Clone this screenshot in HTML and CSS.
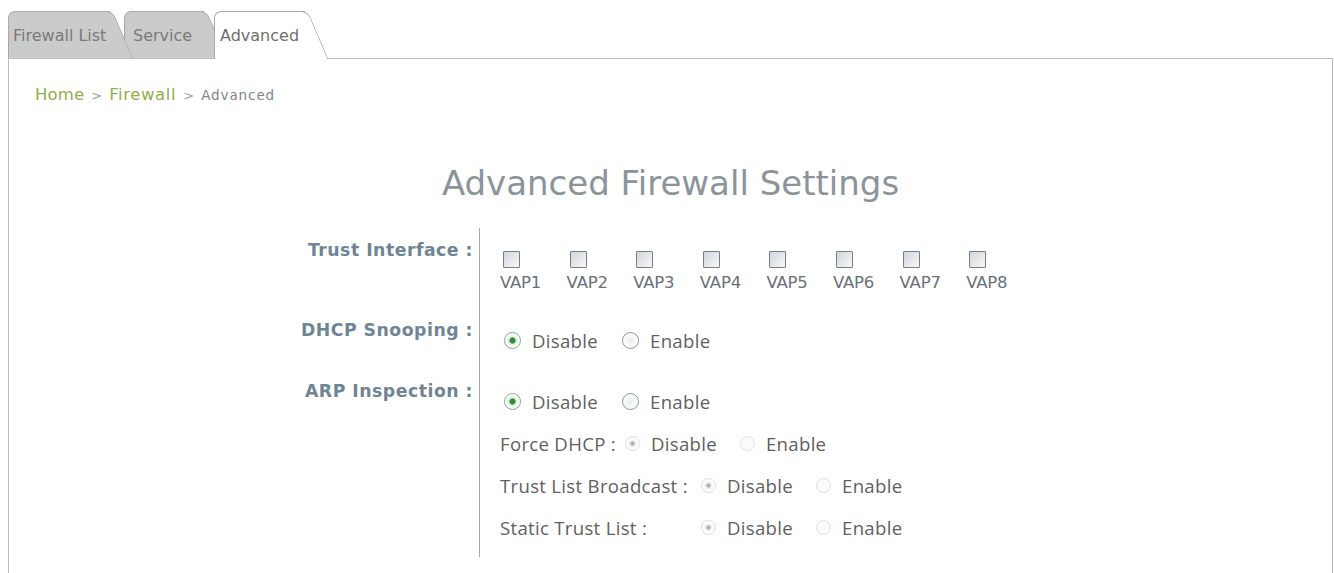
FILE: index.html
```html
<!DOCTYPE html>
<html>
<head>
<meta charset="utf-8">
<link rel="stylesheet" href="styles.css">
</head>
<body>
<div class="tabs">
  <div class="tab tab-first">Firewall List</div>
  <div class="tab tab-second">Service</div>
  <div class="tab tab-active">Advanced</div>
</div>
<div class="frame">
  <div class="crumbs"><span class="crumb-link">Home</span><span class="crumb-sep">&gt;</span><span class="crumb-link">Firewall</span><span class="crumb-sep">&gt;</span><span class="crumb-current">Advanced</span></div>
  <h1 class="title">Advanced Firewall Settings</h1>
  <div class="form">
    <div class="label label-trust">Trust Interface :</div>
    <div class="field field-trust">
      <div class="vaps">
        <label class="vap"><input type="checkbox" class="cb"><span class="vap-name">VAP1</span></label>
        <label class="vap"><input type="checkbox" class="cb"><span class="vap-name">VAP2</span></label>
        <label class="vap"><input type="checkbox" class="cb"><span class="vap-name">VAP3</span></label>
        <label class="vap"><input type="checkbox" class="cb"><span class="vap-name">VAP4</span></label>
        <label class="vap"><input type="checkbox" class="cb"><span class="vap-name">VAP5</span></label>
        <label class="vap"><input type="checkbox" class="cb"><span class="vap-name">VAP6</span></label>
        <label class="vap"><input type="checkbox" class="cb"><span class="vap-name">VAP7</span></label>
        <label class="vap"><input type="checkbox" class="cb"><span class="vap-name">VAP8</span></label>
      </div>
    </div>

    <div class="label label-dhcp">DHCP Snooping :</div>
    <div class="field field-dhcp">
      <div class="line">
        <input type="radio" name="dhcp" class="rd" checked><span class="opt opt-dis">Disable</span>
        <input type="radio" name="dhcp" class="rd"><span class="opt">Enable</span>
      </div>
    </div>

    <div class="label label-arp">ARP Inspection :</div>
    <div class="field field-arp">
      <div class="line">
        <input type="radio" name="arp" class="rd" checked><span class="opt opt-dis">Disable</span>
        <input type="radio" name="arp" class="rd"><span class="opt">Enable</span>
      </div>
      <div class="line sub">
        <span class="sub-label sub-force">Force DHCP :</span>
        <input type="radio" name="force" class="rd rd-off" checked disabled><span class="opt opt-dis2">Disable</span>
        <input type="radio" name="force" class="rd rd-off" disabled><span class="opt">Enable</span>
      </div>
      <div class="line sub">
        <span class="sub-label sub-wide">Trust List Broadcast :</span>
        <input type="radio" name="bcast" class="rd rd-off" checked disabled><span class="opt opt-dis2">Disable</span>
        <input type="radio" name="bcast" class="rd rd-off" disabled><span class="opt">Enable</span>
      </div>
      <div class="line sub">
        <span class="sub-label sub-wide">Static Trust List :</span>
        <input type="radio" name="static" class="rd rd-off" checked disabled><span class="opt opt-dis2">Disable</span>
        <input type="radio" name="static" class="rd rd-off" disabled><span class="opt">Enable</span>
      </div>
    </div>
  </div>
</div>
</body>
</html>
```

FILE: styles.css
```css
html, body {
  background: #ffffff;
}
body {
  margin: 10px 1px 0 8px;
  font-family: "DejaVu Sans", Verdana, sans-serif;
  overflow: hidden;
  height: 563px;
}

/* ---------- tabs ---------- */
.tabs {
  display: flex;
  align-items: flex-end;
  height: 48px;
  position: relative;
  z-index: 2;
}
.tab {
  position: relative;
  box-sizing: border-box;
  height: 47px;
  display: flex;
  align-items: center;
  padding: 0 0 0 4px;
  background: #cbcbcb;
  border: 1px solid #a9a9a9;
  border-right: 0;
  border-bottom: 0;
  border-radius: 7px 0 0 0;
  font-size: 16px;
  color: #7a7a7a;
  letter-spacing: 0;
  white-space: nowrap;
}
.tab::after {
  content: "";
  position: absolute;
  z-index: -1;
  top: -1px;
  bottom: 0;
  left: calc(100% - 22px);
  width: 24px;
  background: inherit;
  border-top: 1px solid #a9a9a9;
  border-right: 1px solid #a9a9a9;
  border-top-right-radius: 7px;
  transform: skewX(23deg);
  transform-origin: top left;
}
.tab-first {
  width: 102px;
  z-index: 2;
}
.tab-second {
  width: 80px;
  margin-left: 14px;
  padding-left: 8px;
  z-index: 1;
}
.tab-active {
  width: 91px;
  height: 48px;
  margin-left: 10px;
  margin-bottom: -1px;
  padding-left: 5px;
  background: #ffffff;
  z-index: 3;
  color: #6e6e6e;
}

/* ---------- frame ---------- */
.frame {
  position: relative;
  z-index: 1;
  border: 1px solid #bdbdbd;
  border-bottom: 0;
  height: 515px;
  box-sizing: border-box;
}

.crumbs {
  display: flex;
  align-items: baseline;
  margin: 25px 0 0 26px;
  line-height: 22px;
  font-size: 16.5px;
  letter-spacing: 0.1px;
}
.crumb-link {
  color: #8fb048;
}
.crumb-link + .crumb-sep + .crumb-link {
  letter-spacing: 0.6px;
}
.crumb-sep {
  color: #9aa0a6;
  font-size: 13px;
  margin: 0 7px 0 7px;
}
.crumb-current {
  color: #80868c;
  font-size: 13.5px;
  letter-spacing: 0.9px;
}

.title {
  margin: 56px 0 0 0;
  text-align: center;
  font-weight: normal;
  font-size: 34px;
  line-height: 40px;
  color: #8c949b;
}

/* ---------- form ---------- */
.form {
  margin-top: 25px;
  display: grid;
  grid-template-columns: 470px 1fr;
}
.label {
  box-sizing: border-box;
  text-align: right;
  padding-right: 6px;
  font-weight: bold;
  font-size: 17.3px;
  line-height: 20px;
  color: #6f8494;
  letter-spacing: 0.5px;
}
.field {
  border-left: 1px solid #a8a8a8;
  padding-left: 20px;
}
.label-trust { padding-top: 12px; }
.field-trust { padding-top: 23px; height: 82px; box-sizing: border-box; }
.label-dhcp { padding-top: 10px; }
.field-dhcp { padding-top: 20px; height: 61px; box-sizing: border-box; }
.label-arp { padding-top: 10px; }
.field-arp { padding-top: 20px; padding-bottom: 20px; }

.vaps {
  display: flex;
}
.vap {
  display: flex;
  flex-direction: column;
  width: 66.6px;
}
.cb {
  appearance: none;
  -webkit-appearance: none;
  box-sizing: border-box;
  width: 17px;
  height: 17px;
  margin: 0 0 0 3px;
  border: 1px solid #737e8a;
  background: linear-gradient(135deg, #d3d7db, #f6f7f8);
  border-radius: 1px;
}
.vap-name {
  margin-top: 4px;
  font-size: 16.5px;
  line-height: 22px;
  color: #6a7078;
  letter-spacing: -0.2px;
}

.line {
  display: flex;
  align-items: center;
  height: 20px;
  font-family: "Open Sans", "Noto Sans", sans-serif;
  font-size: 18.6px;
  color: #5f5f5f;
  letter-spacing: 0.3px;
}
.sub {
  margin-top: 22px;
}
.rd {
  appearance: none;
  -webkit-appearance: none;
  box-sizing: border-box;
  width: 17px;
  height: 17px;
  margin: 0 11px 0 4px;
  border-radius: 50%;
  border: 1.5px solid #8c9196;
  background: radial-gradient(circle, #e9edf1 0, #ffffff 75%);
  flex: none;
}
.rd:checked {
  border-color: #86a689;
  background: radial-gradient(circle, #2f7f3a 0, #3e8e46 2.6px, #d8eed8 3.6px, #ffffff 6.5px);
}
.rd-off {
  width: 15px;
  height: 15px;
  margin: 0 11px 0 1px;
  border: 1px solid #e0e0e0;
  background: #fbfbfb;
}
.rd-off:checked {
  border-color: #dcdcdc;
  background: radial-gradient(circle, #a8a8a8 0, #b8b8b8 1.7px, #f0f0f0 2.8px, #ffffff 5.5px);
}
.opt-dis {
  margin-right: 20px;
}
.opt-dis2 {
  margin-right: 22px;
}
.sub-label {
  color: #5f5f5f;
}
.sub-force {
  margin-right: 8px;
}
.sub-wide {
  width: 200px;
}
```
